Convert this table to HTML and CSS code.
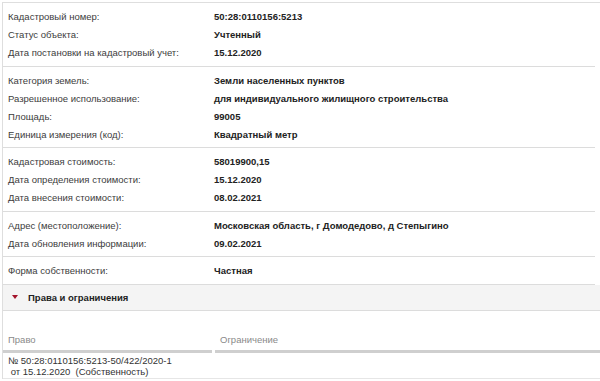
FILE: index.html
```html
<!DOCTYPE html>
<html lang="ru">
<head>
<meta charset="utf-8">
<link rel="stylesheet" href="styles.css">
</head>
<body>
<div class="page">
  <div class="panel">
    <div class="group">
      <div class="row"><span class="label">Кадастровый номер:</span><span class="value">50:28:0110156:5213</span></div>
      <div class="row"><span class="label">Статус объекта:</span><span class="value">Учтенный</span></div>
      <div class="row"><span class="label">Дата постановки на кадастровый учет:</span><span class="value">15.12.2020</span></div>
    </div>
    <div class="group">
      <div class="row"><span class="label">Категория земель:</span><span class="value">Земли населенных пунктов</span></div>
      <div class="row"><span class="label">Разрешенное использование:</span><span class="value">для индивидуального жилищного строительства</span></div>
      <div class="row"><span class="label">Площадь:</span><span class="value">99005</span></div>
      <div class="row"><span class="label">Единица измерения (код):</span><span class="value">Квадратный метр</span></div>
    </div>
    <div class="group">
      <div class="row"><span class="label">Кадастровая стоимость:</span><span class="value">58019900,15</span></div>
      <div class="row"><span class="label">Дата определения стоимости:</span><span class="value">15.12.2020</span></div>
      <div class="row"><span class="label">Дата внесения стоимости:</span><span class="value">08.02.2021</span></div>
    </div>
    <div class="group">
      <div class="row"><span class="label">Адрес (местоположение):</span><span class="value">Московская область, г Домодедово, д Степыгино</span></div>
      <div class="row"><span class="label">Дата обновления информации:</span><span class="value">09.02.2021</span></div>
    </div>
    <div class="group">
      <div class="row"><span class="label">Форма собственности:</span><span class="value">Частная</span></div>
    </div>
    <div class="section">
      <span class="arrow"></span><span class="section-title">Права и ограничения</span>
    </div>
    <div class="rights">
      <div class="thead">
        <div class="th th-left">Право</div>
        <div class="th th-right">Ограничение</div>
      </div>
      <div class="trow">
        <div class="td td-left">№ 50:28:0110156:5213-50/422/2020-1<br>&nbsp;от 15.12.2020&nbsp; (Собственность)</div>
        <div class="td td-right"></div>
      </div>
    </div>
  </div>
</div>
</body>
</html>
```

FILE: styles.css
```css
html, body {
  margin: 0;
  padding: 0;
  background: #ffffff;
}
body {
  font-family: "Liberation Sans", Arial, sans-serif;
  font-size: 9.5px;
  color: #333333;
}
.page {
  padding: 2px 0 0 2px;
}
.panel {
  border-left: 1px solid #dedede;
  border-top: 1px solid #dedede;
}
.group {
  padding: 4.5px 0 4px;
  border-bottom: 1px solid #dcdcdc;
  margin-right: 5px;
}
.row {
  display: grid;
  grid-template-columns: 206px 1fr;
  height: 18px;
  align-items: center;
  padding-left: 5px;
}
.label {
  color: #3c3c3c;
}
.value {
  font-weight: bold;
  color: #222222;
}
.section {
  display: flex;
  align-items: center;
  height: 25px;
  background: #f4f4f4;
  border-bottom: 1px solid #dcdcdc;
  padding-left: 9px;
}
.arrow {
  width: 0;
  height: 0;
  border-left: 3px solid transparent;
  border-right: 3px solid transparent;
  border-top: 4px solid #a3132b;
  margin-right: 10px;
}
.section-title {
  font-weight: bold;
  color: #222222;
}
.rights {
  padding-top: 23px;
}
.thead {
  display: flex;
  gap: 3px;
}
.th {
  color: #8a8a8a;
  padding: 0 0 4px 5px;
  border-bottom: 3px solid #cfcfcf;
  height: 12px;
}
.th-left {
  width: 204px;
}
.th-right {
  flex: 1;
}
.trow {
  display: flex;
  border-bottom: 1px solid #e6e6e6;
}
.td {
  line-height: 11px;
  color: #333333;
  padding: 2px 0 1px 5px;
}
.td-left {
  width: 207px;
}
```
